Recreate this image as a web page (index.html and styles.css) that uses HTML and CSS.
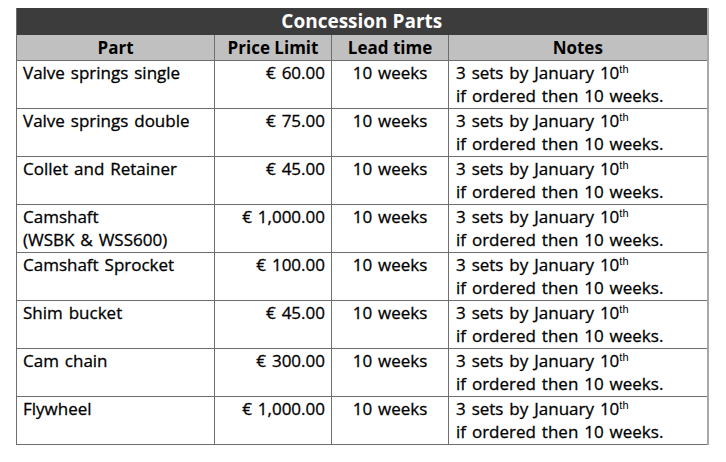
FILE: index.html
```html
<!DOCTYPE html>
<html>
<head>
<meta charset="utf-8">
<link rel="stylesheet" href="styles.css">
</head>
<body>
<table class="parts">
  <colgroup>
    <col class="c-part"><col class="c-price"><col class="c-lead"><col class="c-notes">
  </colgroup>
  <thead>
    <tr><th class="title" colspan="4">Concession Parts</th></tr>
    <tr class="head"><th>Part</th><th>Price Limit</th><th>Lead time</th><th>Notes</th></tr>
  </thead>
  <tbody>
    <tr><td>Valve springs single</td><td class="price">€ 60.00</td><td class="lead">10 weeks</td><td class="notes">3 sets by January 10<sup>th</sup><br>if ordered then 10 weeks.</td></tr>
    <tr><td>Valve springs double</td><td class="price">€ 75.00</td><td class="lead">10 weeks</td><td class="notes">3 sets by January 10<sup>th</sup><br>if ordered then 10 weeks.</td></tr>
    <tr><td>Collet and Retainer</td><td class="price">€ 45.00</td><td class="lead">10 weeks</td><td class="notes">3 sets by January 10<sup>th</sup><br>if ordered then 10 weeks.</td></tr>
    <tr><td>Camshaft<br>(WSBK &amp; WSS600)</td><td class="price">€ 1,000.00</td><td class="lead">10 weeks</td><td class="notes">3 sets by January 10<sup>th</sup><br>if ordered then 10 weeks.</td></tr>
    <tr><td>Camshaft Sprocket</td><td class="price">€ 100.00</td><td class="lead">10 weeks</td><td class="notes">3 sets by January 10<sup>th</sup><br>if ordered then 10 weeks.</td></tr>
    <tr><td>Shim bucket</td><td class="price">€ 45.00</td><td class="lead">10 weeks</td><td class="notes">3 sets by January 10<sup>th</sup><br>if ordered then 10 weeks.</td></tr>
    <tr><td>Cam chain</td><td class="price">€ 300.00</td><td class="lead">10 weeks</td><td class="notes">3 sets by January 10<sup>th</sup><br>if ordered then 10 weeks.</td></tr>
    <tr><td>Flywheel</td><td class="price">€ 1,000.00</td><td class="lead">10 weeks</td><td class="notes">3 sets by January 10<sup>th</sup><br>if ordered then 10 weeks.</td></tr>
  </tbody>
</table>
</body>
</html>
```
FILE: styles.css
```css
html, body {
  margin: 0;
  padding: 0;
  background: #ffffff;
}
body {
  padding: 8px 0 0 16px;
  font-family: "Open Sans", "Liberation Sans", sans-serif;
  color: #000;
}
.parts {
  border-collapse: collapse;
  table-layout: fixed;
  width: 691px;
  border-left: 1px solid #6e6e6e;
  border-right: 2px solid #a8a8a8;
  border-bottom: 1px solid #6e6e6e;
}
.c-part { width: 198px; }
.c-price { width: 117px; }
.c-lead { width: 117px; }
.c-notes { width: 259px; }
.title {
  background: #3c3c3c;
  color: #fff;
  font-size: 19px;
  font-weight: 700;
  line-height: 27px;
  height: 27px;
  padding: 0;
  text-align: center;
}
.head th {
  background: #c0c0c0;
  color: #000;
  font-size: 17px;
  font-weight: 700;
  line-height: 25px;
  height: 25px;
  padding: 0;
  text-align: center;
  border: 1px solid #6e6e6e;
  border-top: none;
}
td {
  font-size: 17px;
  line-height: 23px;
  word-spacing: 1.5px;
  vertical-align: top;
  padding: 0 6px 1px 6px;
  border: 1px solid #6e6e6e;
  white-space: nowrap;
  -webkit-text-stroke: 0.3px #000;
}
td.price { text-align: right; }
td.lead { text-align: center; }
td.notes { padding-left: 7px; }
sup {
  font-family: "Liberation Sans", sans-serif;
  font-size: 11px;
  line-height: 0;
  vertical-align: 6px;
  word-spacing: 0;
  -webkit-text-stroke: 0;
}
```
